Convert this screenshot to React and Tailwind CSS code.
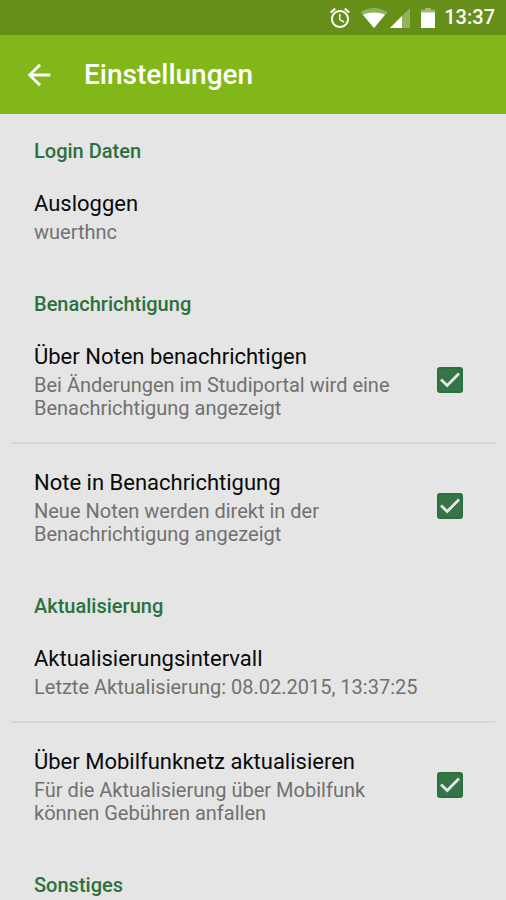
import { useState } from "react";

function StatusBar() {
  return (
    <div className="flex h-[35px] items-center justify-end bg-[#658f18] pr-[11px] text-white">
      <svg width="24" height="24" viewBox="0 0 24 24" className="mr-2" fill="currentColor" aria-hidden="true">
        <path d="M22 5.72l-4.6-3.86-1.29 1.53 4.6 3.86L22 5.72zM7.88 3.39L6.6 1.86 2 5.71l1.29 1.53 4.59-3.85zM12.5 8H11v6l4.75 2.85.75-1.23-4-2.37V8zM12 4c-4.97 0-9 4.03-9 9s4.02 9 9 9c4.97 0 9-4.03 9-9s-4.03-9-9-9zm0 16c-3.87 0-7-3.13-7-7s3.13-7 7-7 7 3.13 7 7-3.13 7-7 7z" />
      </svg>
      <svg width="28" height="20" viewBox="0 0 28 20" className="mr-[2px]" fill="currentColor" aria-hidden="true">
        <path d="M14 20L0.500 4.600C4.500 1.500 9 0 14 0s9.500 1.500 13.500 4.600z" opacity="0.3" />
        <path d="M14 20L3 6.800C6 5.200 10 4.400 14 4.400s8 0.800 11 2.400z" />
      </svg>
      <svg width="20" height="20" viewBox="0 0 20 20" className="mr-[11px]" fill="currentColor" aria-hidden="true">
        <path d="M0 20L20 0v20z" opacity="0.3" />
        <path d="M0 20L12 8v12z" />
      </svg>
      <svg width="14" height="20" viewBox="0 0 14 20" className="mr-[9px]" fill="currentColor" aria-hidden="true">
        <path d="M4 0h6v2h4v3H0V2h4z" opacity="0.4" />
        <path d="M0 4.500h14V20H0z" />
      </svg>
      <span className="text-[20px] leading-[25px] font-medium">13:37</span>
    </div>
  );
}

function AppBar() {
  return (
    <header className="flex h-[79px] items-center bg-[#82b71a] pl-[22px] text-white">
      <button type="button" aria-label="Zurück" className="mr-7 flex size-[34px] items-center justify-center">
        <svg width="34" height="34" viewBox="0 0 24 24" fill="currentColor" aria-hidden="true">
          <path d="M20 11H7.830l5.590-5.590L12 4l-8 8 8 8 1.410-1.410L7.830 13H20v-2z" />
        </svg>
      </button>
      <h1 className="text-[28px] leading-[34px] font-medium">Einstellungen</h1>
    </header>
  );
}

function Category({ title, first, children }) {
  return (
    <section>
      <h2
        className={`px-[23px] pb-[2px] text-[20px] leading-[23px] font-medium text-[#2b713f] ${
          first ? "pt-[26px]" : "pt-[27px]"
        }`}
      >
        {title}
      </h2>
      <div className="divide-y-2 divide-[#d6d6d6]">{children}</div>
    </section>
  );
}

function PreferenceText({ title, summary }) {
  return (
    <>
      <span className="block text-[22px] leading-[34px] text-[#0a0a0a]">{title}</span>
      <span className="block text-[20px] leading-[23px] text-[#717171]">{summary}</span>
    </>
  );
}

function Preference({ title, summary }) {
  return (
    <div>
      <button type="button" className="block w-full px-[23px] py-[22px] text-left">
        <PreferenceText title={title} summary={summary} />
      </button>
    </div>
  );
}

function CheckPreference({ title, summary }) {
  const [checked, setChecked] = useState(true);
  return (
    <div>
      <label className="flex items-center pr-8 pl-[23px]">
        <span className="min-w-0 flex-1 py-[22px] pr-10">
          <PreferenceText title={title} summary={summary} />
        </span>
        <span className="grid size-[26px] shrink-0">
          <input
            type="checkbox"
            checked={checked}
            onChange={(e) => setChecked(e.target.checked)}
            className="peer col-start-1 row-start-1 size-[26px] appearance-none rounded-[3px] border-2 border-[#717171] checked:border-[#2b713f] checked:bg-[#357447]"
          />
          <svg
            viewBox="0 0 26 26"
            className="pointer-events-none invisible col-start-1 row-start-1 size-[26px] peer-checked:visible"
            fill="none"
            stroke="#e5e5e5"
            strokeWidth="2.800"
            aria-hidden="true"
          >
            <path d="M4 12.500l6.200 6L22 6.500" />
          </svg>
        </span>
      </label>
    </div>
  );
}

export default function App() {
  return (
    <div className="h-screen overflow-hidden bg-[#e5e5e5] font-['Roboto',sans-serif]">
      <StatusBar />
      <AppBar />
      <main className="mx-[11px]">
        <Category title="Login Daten" first>
          <Preference title="Ausloggen" summary="wuerthnc" />
        </Category>
        <Category title="Benachrichtigung">
          <CheckPreference
            title="Über Noten benachrichtigen"
            summary="Bei Änderungen im Studiportal wird eine Benachrichtigung angezeigt"
          />
          <CheckPreference
            title="Note in Benachrichtigung"
            summary="Neue Noten werden direkt in der Benachrichtigung angezeigt"
          />
        </Category>
        <Category title="Aktualisierung">
          <Preference title="Aktualisierungsintervall" summary="Letzte Aktualisierung: 08.02.2015, 13:37:25" />
          <CheckPreference
            title="Über Mobilfunknetz aktualisieren"
            summary="Für die Aktualisierung über Mobilfunk können Gebühren anfallen"
          />
        </Category>
        <Category title="Sonstiges" />
      </main>
    </div>
  );
}
